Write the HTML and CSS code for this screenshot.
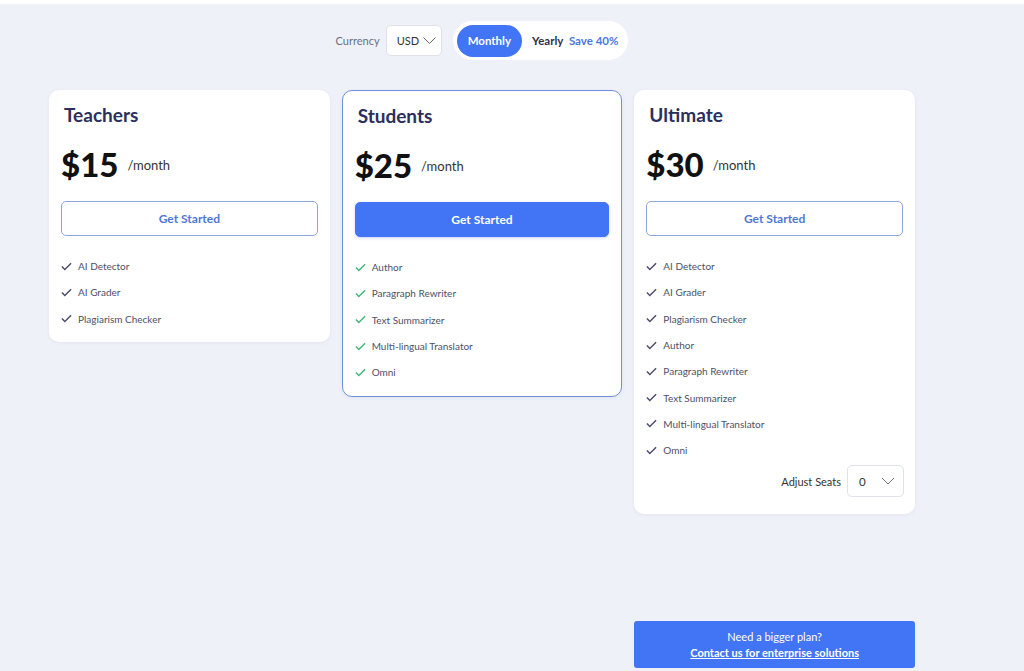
FILE: index.html
```html
<!DOCTYPE html>
<html lang="en">
<head>
  <meta charset="UTF-8" />
  <meta name="viewport" content="width=device-width, initial-scale=1" />
  <title>Pricing</title>
  <link rel="stylesheet" href="styles.css">
</head>
<body>
  <div class="franja"></div>
  <div class="contenedor">
    <div class="barra">
      <span class="etiqueta">Currency</span>
      <div class="selector selector-moneda">
        <span>USD</span>
        <svg width="13" height="7" viewBox="0 0 13 7"><path d="M0.5 0.5l6 6 6-6" fill="none" stroke="#666" stroke-width="1"/></svg>
      </div>
      <div class="periodo">
        <span class="periodo-activo">Monthly</span>
        <span class="periodo-opcion">Yearly <em>Save 40%</em></span>
      </div>
    </div>

    <div class="planes">
      <div class="plan">
        <h3>Teachers</h3>
        <div class="precio"><strong>$15</strong><span>/month</span></div>
        <button class="boton">Get Started</button>
        <ul class="lista">
          <li><svg viewBox="0 0 12 9"><path d="M1 4.5l3.2 3.2L11 1" /></svg>AI Detector</li>
          <li><svg viewBox="0 0 12 9"><path d="M1 4.5l3.2 3.2L11 1" /></svg>AI Grader</li>
          <li><svg viewBox="0 0 12 9"><path d="M1 4.5l3.2 3.2L11 1" /></svg>Plagiarism Checker</li>
        </ul>
      </div>

      <div class="plan plan-destacado">
        <h3>Students</h3>
        <div class="precio"><strong>$25</strong><span>/month</span></div>
        <button class="boton boton-lleno">Get Started</button>
        <ul class="lista lista-verde">
          <li><svg viewBox="0 0 12 9"><path d="M1 4.5l3.2 3.2L11 1" /></svg>Author</li>
          <li><svg viewBox="0 0 12 9"><path d="M1 4.5l3.2 3.2L11 1" /></svg>Paragraph Rewriter</li>
          <li><svg viewBox="0 0 12 9"><path d="M1 4.5l3.2 3.2L11 1" /></svg>Text Summarizer</li>
          <li><svg viewBox="0 0 12 9"><path d="M1 4.5l3.2 3.2L11 1" /></svg>Multi-lingual Translator</li>
          <li><svg viewBox="0 0 12 9"><path d="M1 4.5l3.2 3.2L11 1" /></svg>Omni</li>
        </ul>
      </div>

      <div class="plan plan-ultimo">
        <h3>Ultimate</h3>
        <div class="precio"><strong>$30</strong><span>/month</span></div>
        <button class="boton">Get Started</button>
        <ul class="lista">
          <li><svg viewBox="0 0 12 9"><path d="M1 4.5l3.2 3.2L11 1" /></svg>AI Detector</li>
          <li><svg viewBox="0 0 12 9"><path d="M1 4.5l3.2 3.2L11 1" /></svg>AI Grader</li>
          <li><svg viewBox="0 0 12 9"><path d="M1 4.5l3.2 3.2L11 1" /></svg>Plagiarism Checker</li>
          <li><svg viewBox="0 0 12 9"><path d="M1 4.5l3.2 3.2L11 1" /></svg>Author</li>
          <li><svg viewBox="0 0 12 9"><path d="M1 4.5l3.2 3.2L11 1" /></svg>Paragraph Rewriter</li>
          <li><svg viewBox="0 0 12 9"><path d="M1 4.5l3.2 3.2L11 1" /></svg>Text Summarizer</li>
          <li><svg viewBox="0 0 12 9"><path d="M1 4.5l3.2 3.2L11 1" /></svg>Multi-lingual Translator</li>
          <li><svg viewBox="0 0 12 9"><path d="M1 4.5l3.2 3.2L11 1" /></svg>Omni</li>
        </ul>
        <div class="asientos">
          <span>Adjust Seats</span>
          <div class="selector selector-asientos">
            <span>0</span>
            <svg width="14" height="8" viewBox="0 0 14 8"><path d="M1 1l6 6 6-6" fill="none" stroke="#777" stroke-width="1"/></svg>
          </div>
        </div>
      </div>

      <div class="empresa">
        <p>Need a bigger plan?</p>
        <a href="#">Contact us for enterprise solutions</a>
      </div>
    </div>
  </div>
</body>
</html>
```

FILE: styles.css
```css
body {
  margin: 0;
  font-family: Lato, "Noto Sans", sans-serif;
  background-color: #eff1f9;
  color: #333;
}

.franja {
  height: 4px;
  background: #fff;
}

.contenedor {
  width: 866px;
  margin-left: 49px;
  padding-top: 17px;
}

/* barra superior: moneda y periodo */
.barra {
  display: flex;
  align-items: center;
  justify-content: center;
  gap: 6px;
  height: 39px;
}

.etiqueta {
  font-size: 11px;
  color: #6b6f80;
}

.selector {
  display: flex;
  align-items: center;
  justify-content: space-between;
  background: #fff;
  border: 1px solid #dfe2ec;
  border-radius: 5px;
  box-sizing: border-box;
  color: #333;
}

.selector-moneda {
  width: 56px;
  height: 31px;
  padding: 0 5px 0 10px;
  font-size: 11px;
  margin-right: 5px;
}

.periodo {
  display: flex;
  align-items: center;
  background: #fff;
  border-radius: 20px;
  height: 39px;
  padding: 0 10px 0 4px;
  box-sizing: border-box;
}

.periodo-activo {
  background: #4275f5;
  color: #fff;
  font-size: 11.5px;
  font-weight: 700;
  border-radius: 16px;
  height: 32px;
  line-height: 32px;
  padding: 0 11px;
}

.periodo-opcion {
  font-size: 11.5px;
  font-weight: 700;
  color: #2d3050;
  margin-left: 10px;
}

.periodo-opcion em {
  font-style: normal;
  color: #4a78e0;
  margin-left: 3px;
}

/* tarjetas */
.planes {
  display: grid;
  grid-template-columns: repeat(3, 1fr);
  column-gap: 12px;
  align-items: start;
  margin-top: 30px;
}

.plan {
  background: #fff;
  border-radius: 10px;
  padding: 12px 12px 10px;
  box-shadow: 0 1px 4px rgba(40, 50, 90, 0.06);
  box-sizing: border-box;
}

.plan-destacado {
  border: 1px solid #6f91dc;
  padding: 12px 12px 11px;
}

.plan-ultimo {
  padding-bottom: 11px;
}

.plan h3 {
  margin: 1px 0 0 3px;
  font-size: 19px;
  font-weight: 700;
  color: #2a2f5c;
  height: 24px;
  line-height: 24px;
}

.precio {
  display: flex;
  align-items: center;
  margin-top: 17px;
  height: 40px;
}

.precio strong {
  font-size: 33px;
  font-weight: 900;
  color: #111;
}

.precio span {
  font-size: 13px;
  color: #333;
  margin-left: 9px;
  padding-top: 2px;
}

.boton {
  display: block;
  width: 100%;
  height: 35px;
  margin-top: 17px;
  background: #fff;
  border: 1px solid #8ea6dc;
  border-radius: 5px;
  color: #4d78d8;
  font-family: inherit;
  font-size: 12px;
  font-weight: 700;
  cursor: pointer;
}

.boton-lleno {
  background: #4275f5;
  border-color: #4275f5;
  color: #fff;
  box-shadow: 0 1px 3px rgba(40, 80, 200, 0.25);
}

.lista {
  list-style: none;
  padding: 0;
  margin: 17px 0 0;
}

.lista li {
  display: flex;
  align-items: center;
  height: 26.3px;
  font-size: 10px;
  color: #4d5068;
}

.lista svg {
  width: 11px;
  height: 9px;
  margin-right: 6px;
  fill: none;
  stroke: #4a4d68;
  stroke-width: 1.6;
}

.lista-verde svg {
  stroke: #46b67a;
}

.asientos {
  display: flex;
  align-items: center;
  justify-content: flex-end;
  gap: 6px;
  margin-top: 2px;
  margin-bottom: 6px;
  font-size: 11px;
  color: #333;
}

.selector-asientos {
  width: 57px;
  height: 32px;
  padding: 0 8px 0 11px;
  font-size: 11.5px;
  margin-right: -1px;
}

/* caja de empresa */
.empresa {
  grid-column: 3;
  margin-top: 107px;
  background: #4275f5;
  border-radius: 3px;
  height: 47px;
  display: flex;
  flex-direction: column;
  align-items: center;
  justify-content: center;
  color: #fff;
  font-size: 11px;
}

.empresa p {
  margin: 0 0 3px;
}

.empresa a {
  color: #fff;
  font-weight: 700;
}
```
